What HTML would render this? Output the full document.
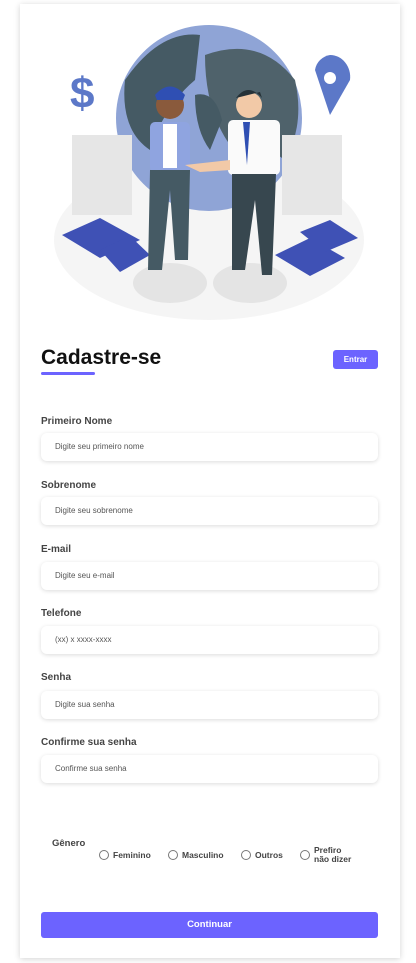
<!DOCTYPE html><html><head><style>
body{margin:0;background:#fff;font-family:"Liberation Sans",sans-serif;width:416px;height:963px;overflow:hidden;position:relative}
.card{position:absolute;left:20px;top:4px;width:380px;height:954px;background:#fff;box-shadow:0 1px 6px rgba(0,0,0,.18)}
.a{position:absolute}
h1{position:absolute;left:41px;top:346px;margin:0;font-size:21px;font-weight:bold;color:#111}
.ul{left:41px;top:372px;width:54px;height:3px;background:#6c63ff;border-radius:2px}
.btn{background:#6c63ff;color:#fff;font-weight:bold;border-radius:3px;text-align:center}
.lab{left:41px;font-size:10px;font-weight:bold;color:#444}
.in{left:41px;width:337px;height:28px;border-radius:6px;box-shadow:0 1px 4px rgba(0,0,0,.14);background:#fff;font-size:8px;color:#555;line-height:28px;text-indent:14px}
.r{font-size:8.5px;font-weight:bold;color:#444;display:flex;align-items:center}
.r i{display:inline-block;width:8px;height:8px;border:1px solid #777;border-radius:50%;margin-right:4px}
</style></head><body>
<div class="card"></div>
<svg class="a" style="left:0;top:0" width="416" height="330">
<ellipse cx="209" cy="240" rx="155" ry="80" fill="#f5f5f5"/>
<circle cx="209" cy="118" r="93" fill="#8fa4d6"/>
<path d="M125 80 Q160 30 200 35 L195 80 Q165 105 150 150 Q120 130 125 80Z" fill="#455a64"/>
<path d="M205 55 Q260 35 295 80 Q305 125 285 160 Q250 135 230 145 Q205 110 205 55Z" fill="#4f626b"/>
<path d="M195 95 Q215 90 222 120 L210 150 Q195 130 195 95Z" fill="#455a64"/>
<rect x="72" y="135" width="60" height="80" fill="#e6e6e6"/><rect x="282" y="135" width="60" height="80" fill="#e6e6e6"/>
<path d="M62 235 L100 218 L140 240 L100 258Z" fill="#3f51b5"/><path d="M100 250 L130 236 L150 255 L120 272Z" fill="#3f51b5"/>
<path d="M275 255 L310 238 L345 258 L310 276Z" fill="#3f51b5"/><path d="M300 232 L330 220 L358 238 L325 252Z" fill="#3f51b5"/>
<text x="70" y="108" font-size="44" font-weight="bold" fill="#5c78c8" font-family="Liberation Sans">$</text>
<path d="M330 55 a20 22 0 0 1 20 25 L330 115 L315 70 a18 18 0 0 1 15 -15Z" fill="#5c78c8"/><circle cx="330" cy="78" r="6" fill="#fff"/>
<ellipse cx="170" cy="283" rx="37" ry="20" fill="#e4e4e4"/><ellipse cx="250" cy="283" rx="37" ry="20" fill="#e4e4e4"/>
<circle cx="170" cy="105" r="14" fill="#8a5a3c"/><path d="M155 95 Q170 78 185 95 L183 100 L157 100Z" fill="#2f4fb3"/>
<rect x="150" y="122" width="40" height="50" rx="5" fill="#8fa4e0"/><rect x="163" y="124" width="14" height="44" fill="#fff"/>
<path d="M150 170 L190 170 L188 260 L175 260 L170 190 L162 270 L148 270Z" fill="#455a64"/>
<circle cx="249" cy="105" r="13" fill="#f2c9a7"/><path d="M236 98 Q248 82 262 98 L260 92Z" fill="#263238"/>
<rect x="228" y="120" width="52" height="55" rx="5" fill="#fafafa"/><path d="M243 122 L247 165 L250 122Z" fill="#2f4fb3"/>
<path d="M232 174 L276 174 L272 275 L262 275 L255 200 L245 270 L232 270Z" fill="#37474f"/>
<path d="M185 165 L230 160 L230 170 L200 172Z" fill="#f2c9a7"/>
</svg>
<h1>Cadastre-se</h1><div class="a ul"></div>
<div class="a btn" style="left:333px;top:350px;width:45px;height:19px;font-size:8px;line-height:19px">Entrar</div>
<div class="a lab" style="top:416px">Primeiro Nome</div><div class="a in" style="top:433px">Digite seu primeiro nome</div>
<div class="a lab" style="top:480px">Sobrenome</div><div class="a in" style="top:497px">Digite seu sobrenome</div>
<div class="a lab" style="top:544px">E-mail</div><div class="a in" style="top:562px">Digite seu e-mail</div>
<div class="a lab" style="top:608px">Telefone</div><div class="a in" style="top:626px">(xx) x xxxx-xxxx</div>
<div class="a lab" style="top:672px">Senha</div><div class="a in" style="top:691px">Digite sua senha</div>
<div class="a lab" style="top:737px">Confirme sua senha</div><div class="a in" style="top:755px">Confirme sua senha</div>
<div class="a lab" style="left:52px;top:838px;font-size:9.5px">Gênero</div>
<div class="a r" style="left:99px;top:850px"><i></i>Feminino</div>
<div class="a r" style="left:168px;top:850px"><i></i>Masculino</div>
<div class="a r" style="left:241px;top:850px"><i></i>Outros</div>
<div class="a r" style="left:300px;top:846px;line-height:9px"><i></i><span>Prefiro<br>não dizer</span></div>
<div class="a btn" style="left:41px;top:912px;width:337px;height:26px;font-size:9.5px;line-height:26px">Continuar</div>
</body></html>
